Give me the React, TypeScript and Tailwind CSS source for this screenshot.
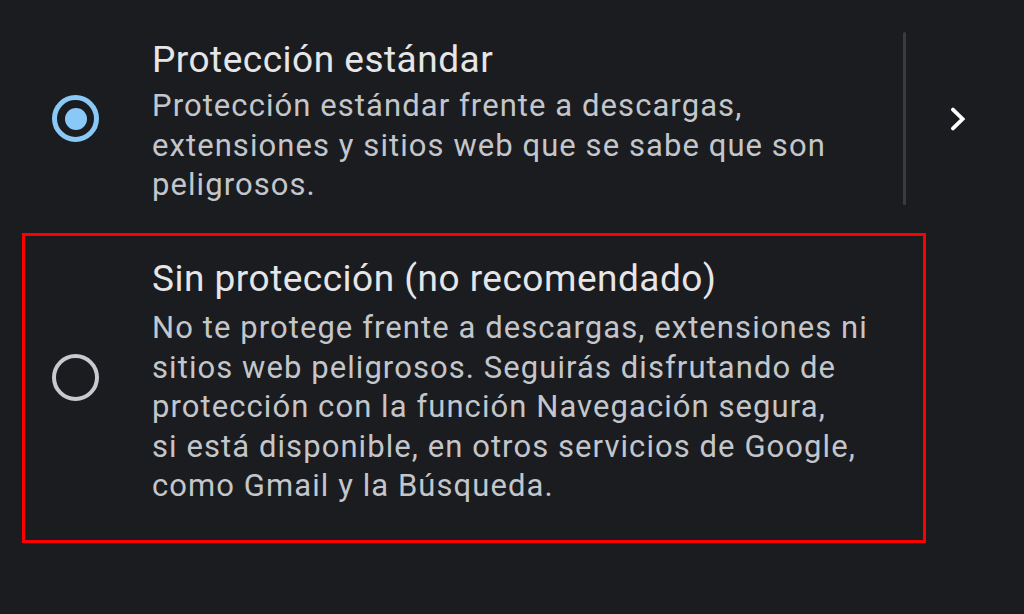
const FONT = { fontFamily: 'Roboto, "Noto Sans", sans-serif' };

function Radio({ checked }: { checked: boolean }) {
  if (checked) {
    return (
      <div className="w-[47px] h-[47px] rounded-full border-[5px] border-[#8ac8f8] flex items-center justify-center">
        <div className="w-[22px] h-[22px] rounded-full bg-[#8ac8f8]" />
      </div>
    );
  }
  return <div className="w-[47px] h-[47px] rounded-full border-[4px] border-[#c8cacf]" />;
}

function Chevron() {
  return (
    <svg width="24" height="24" viewBox="0 0 24 24" fill="none">
      <path
        d="M7 2.6 L16.6 12 L7 21.4"
        stroke="#ffffff"
        strokeWidth="3.8"
        strokeLinecap="round"
        strokeLinejoin="miter"
      />
    </svg>
  );
}

function OptionText({ title, lines, tight }: { title: string; lines: string[]; tight?: boolean }) {
  return (
    <div className="flex flex-col whitespace-nowrap">
      <div className="text-[37px] leading-[44px] tracking-[0.5px] text-[#e6e6e8]">{title}</div>
      <div
        className={
          (tight ? 'mt-[4px] ' : 'mt-[7px] ') +
          'text-[31px] leading-[39.5px] tracking-[1.07px] text-[#c3c6cb]'
        }
      >
        {lines.map((l) => (
          <div key={l}>{l}</div>
        ))}
      </div>
    </div>
  );
}

export default function App() {
  return (
    <div className="w-[1024px] h-[614px] bg-[#1b1c1f] overflow-hidden pt-[32px]" style={FONT}>
      {/* Standard protection */}
      <div className="flex items-start">
        <div className="w-[152px] pl-[52px] pt-[63px]">
          <Radio checked />
        </div>
        <div className="w-[751px] pt-[6px]">
          <OptionText
            tight
            title="Protección estándar"
            lines={[
              'Protección estándar frente a descargas,',
              'extensiones y sitios web que se sabe que son',
              'peligrosos.',
            ]}
          />
        </div>
        <div className="w-[3px] h-[173px] bg-[#3a3b3e] rounded-full" />
        <div className="w-[118px] flex justify-center pt-[75px] pr-[14px]">
          <Chevron />
        </div>
      </div>

      {/* No protection */}
      <div className="ml-[22px] mt-[28px] w-[904px] h-[310px] border-[3px] border-[#ff0000] flex items-start">
        <div className="w-[127px] pl-[27px] pt-[118px]">
          <Radio checked={false} />
        </div>
        <div className="pt-[21px]">
          <OptionText
            title="Sin protección (no recomendado)"
            lines={[
              'No te protege frente a descargas, extensiones ni',
              'sitios web peligrosos. Seguirás disfrutando de',
              'protección con la función Navegación segura,',
              'si está disponible, en otros servicios de Google,',
              'como Gmail y la Búsqueda.',
            ]}
          />
        </div>
      </div>
    </div>
  );
}
